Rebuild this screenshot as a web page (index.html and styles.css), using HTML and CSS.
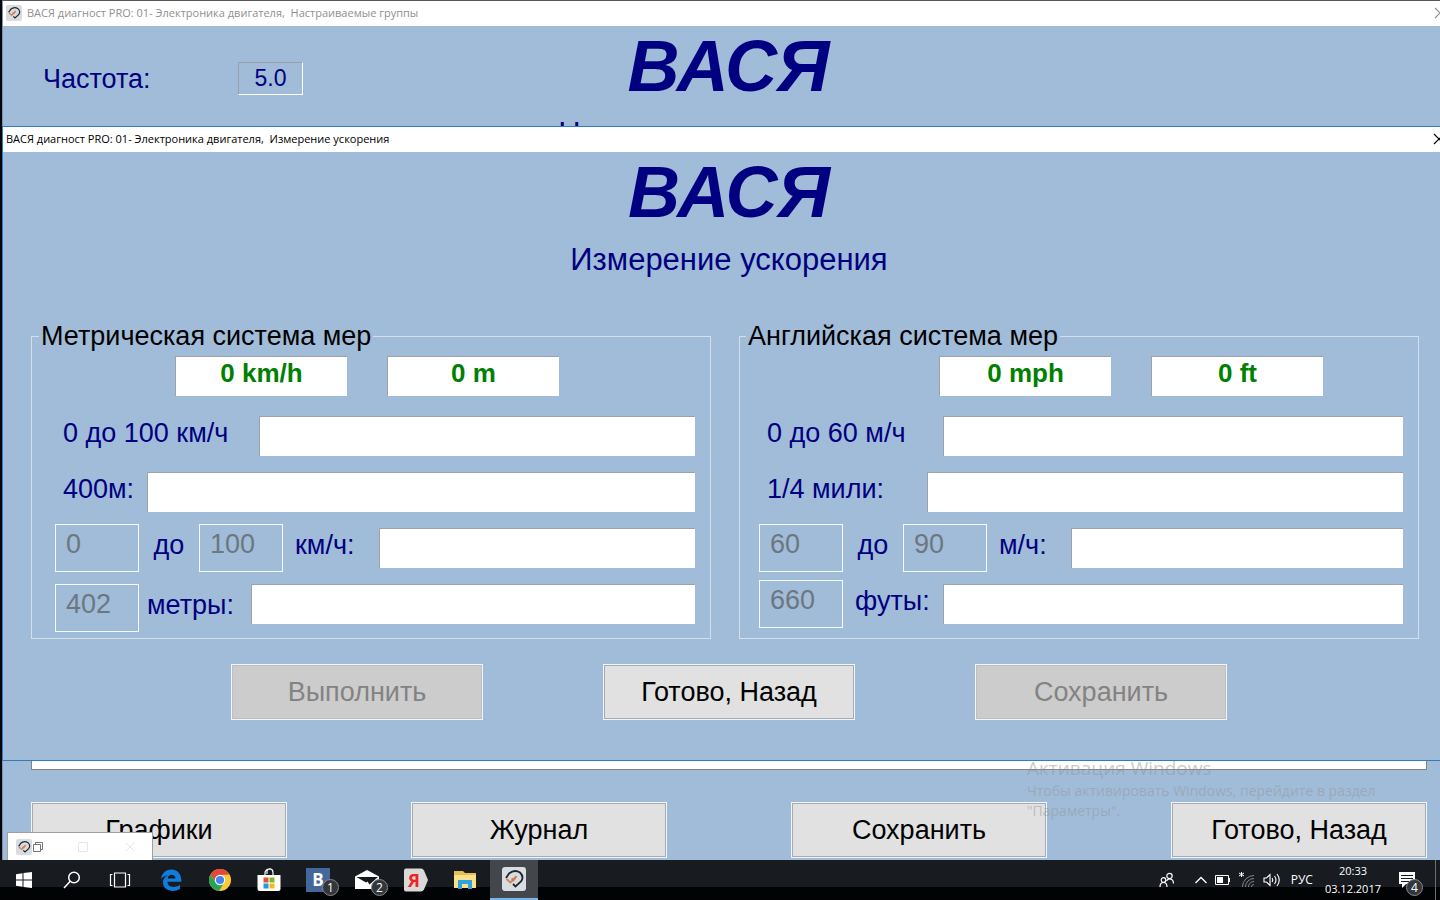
FILE: index.html
```html
<!DOCTYPE html>
<html lang="ru">
<head>
<meta charset="utf-8">
<title>ВАСЯ диагност PRO</title>
<link rel="stylesheet" href="styles.css">
</head>
<body>
<svg class="defs" width="0" height="0" aria-hidden="true">
  <symbol id="logo" viewBox="0 0 24 24">
    <rect width="24" height="24" rx="3" fill="#d9dde1"/>
    <path d="M4 11 L7 6.500 Q12.500 2 18 5.500 Q22.500 10 19 14.500 L13.500 19.500 L11 17" fill="none" stroke="#20242b" stroke-width="1.800"/>
    <path d="M4.500 12 L8.500 15.500 L13.500 10.500" fill="none" stroke="#c98764" stroke-width="2"/>
    <path d="M9.500 11.500 L11.500 13 L14.500 9" fill="none" stroke="#d67a4d" stroke-width="2"/>
  </symbol>
  <symbol id="close" viewBox="0 0 12 12"><path d="M1 1 L11 11 M11 1 L1 11" fill="none" stroke="currentColor" stroke-width="1.200"/></symbol>
</svg>

<div class="desktop">
  <section class="window window-main">
    <header class="titlebar titlebar-inactive">
      <svg class="title-icon"><use href="#logo"/></svg>
      <span class="title-text">ВАСЯ диагност PRO: 01- Электроника двигателя,&nbsp; Настраиваемые группы</span>
      <button class="close" aria-label="Закрыть"><svg width="12" height="12"><use href="#close"/></svg></button>
    </header>
    <div class="main-head">
      <div class="rate"><label for="rate">Частота:</label><input id="rate" class="rate-value" value="5.0" readonly></div>
      <h1 class="brand">ВАСЯ</h1>
      <h2 class="subtitle">Настраиваемые группы</h2>
    </div>
    <div class="main-list"></div>
    <div class="main-actions">
      <button class="btn">Графики</button>
      <button class="btn">Журнал</button>
      <button class="btn">Сохранить</button>
      <button class="btn">Готово, Назад</button>
    </div>
  </section>

  <div class="watermark">
    <p class="watermark-title">Активация Windows</p>
    <p class="watermark-text">Чтобы активировать Windows, перейдите в раздел "Параметры".</p>
  </div>

  <section class="window window-dialog">
    <header class="titlebar">
      <span class="title-text">ВАСЯ диагност PRO: 01- Электроника двигателя,&nbsp; Измерение ускорения</span>
      <button class="close" aria-label="Закрыть"><svg width="12" height="12"><use href="#close"/></svg></button>
    </header>
    <h1 class="brand">ВАСЯ</h1>
    <h2 class="subtitle">Измерение ускорения</h2>
    <div class="groups">
      <fieldset class="group group-metric">
        <legend>Метрическая система мер</legend>
        <div class="readouts"><output class="readout">0 km/h</output><output class="readout">0 m</output></div>
        <div class="row"><label class="lead lead-xl" for="m1">0 до 100 км/ч</label><input id="m1" class="field"></div>
        <div class="row"><label class="lead lead-s" for="m2">400м:</label><input id="m2" class="field"></div>
        <div class="row">
          <div class="range range-long"><input class="mini" value="0" aria-label="от" disabled><span class="between">до</span><input class="mini" value="100" aria-label="до" disabled><label class="unit" for="m3">км/ч:</label></div>
          <input id="m3" class="field">
        </div>
        <div class="row">
          <div class="range range-short range-low"><input class="mini" value="402" aria-label="расстояние" disabled><label class="unit unit-near" for="m4">метры:</label></div>
          <input id="m4" class="field">
        </div>
      </fieldset>
      <fieldset class="group group-english">
        <legend>Английская система мер</legend>
        <div class="readouts"><output class="readout">0 mph</output><output class="readout">0 ft</output></div>
        <div class="row"><label class="lead lead-l" for="e1">0 до 60 м/ч</label><input id="e1" class="field"></div>
        <div class="row"><label class="lead lead-m" for="e2">1/4 мили:</label><input id="e2" class="field"></div>
        <div class="row">
          <div class="range range-mid"><input class="mini" value="60" aria-label="от" disabled><span class="between">до</span><input class="mini" value="90" aria-label="до" disabled><label class="unit" for="e3">м/ч:</label></div>
          <input id="e3" class="field">
        </div>
        <div class="row">
          <div class="range range-feet"><input class="mini" value="660" aria-label="расстояние" disabled><label class="unit" for="e4">футы:</label></div>
          <input id="e4" class="field">
        </div>
      </fieldset>
    </div>
    <div class="dialog-actions">
      <button class="btn" disabled>Выполнить</button>
      <button class="btn">Готово, Назад</button>
      <button class="btn" disabled>Сохранить</button>
    </div>
  </section>

  <div class="mini-window">
    <svg width="16" height="16"><use href="#logo"/></svg>
    <svg width="10" height="10" viewBox="0 0 10 10" fill="none" stroke="#777"><path d="M0.500 2.500h7v7h-7z M2.500 2.500v-2h7v7h-2"/></svg>
    <svg class="mini-max" width="10" height="10" viewBox="0 0 10 10" fill="none" stroke="#e6e6e6"><path d="M0.500 0.500h9v9h-9z"/></svg>
    <svg class="mini-close" width="10" height="10"><use href="#close"/></svg>
  </div>
</div>

<footer class="taskbar">
  <div class="system">
    <button class="task" aria-label="Пуск"><svg width="16" height="16" viewBox="0 0 16 16" fill="#fff"><path d="M0 2.200 6.500 1.300V7.500H0z M7.500 1.100 16 0V7.500H7.500z M0 8.500H6.500V14.700L0 13.800z M7.500 8.500H16V16L7.500 14.900z"/></svg></button>
    <button class="task" aria-label="Поиск"><svg width="18" height="18" viewBox="0 0 18 18" fill="none" stroke="#fff" stroke-width="1.500"><circle cx="11" cy="6.500" r="5.300"/><path d="M7.200 10.300 1 17"/></svg></button>
    <button class="task" aria-label="Представление задач"><svg width="22" height="16" viewBox="0 0 22 16" fill="none" stroke="#fff" stroke-width="1.200"><path d="M5.500 1h11v14h-11z M3.500 2.500H1.500v11h2 M18.500 2.500h2v11h-2"/></svg></button>
  </div>
  <div class="apps">
    <button class="task" aria-label="Edge"><svg width="22" height="22" viewBox="0 0 22 22"><path d="M1 10 C2 3.500 6.500 0.500 11.500 0.500 C18 0.500 21.500 5.500 21.500 12.800 H7.500 C7.500 19 15.500 19 20 16 V20 C13 24 3 21.500 3 13.500 C3 9.500 5.500 7.500 8 6.300 C5 6.800 2.500 8 1 10 Z M7.700 9.500 H15.500 C15.500 4.500 8 4.500 7.700 9.500 Z" fill="#0f7ddb" fill-rule="evenodd"/></svg></button>
    <button class="task" aria-label="Chrome"><svg width="22" height="22" viewBox="0 0 22 22"><circle cx="11" cy="11" r="11" fill="#fbcb37"/><path d="M1.500 5.500 A11 11 0 0 1 20.500 5.500 L11 6 L6.700 13.500Z" fill="#df4a3c"/><path d="M1.500 5.500 A11 11 0 0 0 10 22 L15.300 13.500 L11 16 L6.700 13.500Z" fill="#2ba355"/><circle cx="11" cy="11" r="5.200" fill="#fff"/><circle cx="11" cy="11" r="4.100" fill="#4386f2"/></svg></button>
    <button class="task" aria-label="Магазин"><svg width="24" height="24" viewBox="0 0 24 24"><path d="M8 7V5a4 4 0 0 1 8 0v2 M10 6V4.500a3 3 0 0 1 6-1" fill="none" stroke="#fff" stroke-width="1.200"/><path d="M0.500 7h23v14q0 2-2 2h-19q-2 0-2-2z" fill="#fff"/><path d="M6.500 9.500h5v5h-5z" fill="#e8502f"/><path d="M12.500 9.500h5v5h-5z" fill="#7bb82c"/><path d="M6.500 15.500h5v5h-5z" fill="#1c9ce8"/><path d="M12.500 15.500h5v5h-5z" fill="#fbb81a"/></svg></button>
    <button class="task" aria-label="ВКонтакте"><span class="vk">B</span><span class="count">1</span></button>
    <button class="task" aria-label="Почта"><svg width="24" height="20" viewBox="0 0 24 20"><path d="M0 6.500 12 0 24 6.500V19H0z" fill="#fff"/><path d="M1.500 7H23L14.500 14.500 L12.500 11.500 L11 12.500Z" fill="#15181c"/></svg><span class="count">2</span></button>
    <button class="task" aria-label="Яндекс"><span class="ya"><svg class="ya-shape" width="24" height="24" viewBox="0 0 24 24"><path d="M2 0.500H17q2 0 3 2L24 12l-4 9.500q-1 2-3 2H2q-2 0-2-2v-19q0-2 2-2z" fill="#d9d9d9"/></svg><span class="ya-letter">Я</span></span></button>
    <button class="task" aria-label="Проводник"><svg width="22" height="20" viewBox="0 0 22 20"><path d="M0 1h9l2 2h11v15H0z" fill="#e9bd52"/><path d="M0 5h22v13H0z" fill="#fbe08a"/><path d="M4 10h14v9h-4v-5H8v5H4z" fill="#2da3e0"/></svg></button>
    <button class="task task-active" aria-label="ВАСЯ диагност"><svg width="24" height="24"><use href="#logo"/></svg></button>
  </div>
  <div class="tray">
    <svg class="people" width="16" height="16" viewBox="0 0 16 16" fill="none" stroke="#fff" stroke-width="1.200"><circle cx="10.500" cy="4" r="2.700"/><circle cx="4.500" cy="8" r="2.300"/><path d="M1 15q0-4.500 3.500-4.500T8 15 M7.500 9q1-2 3-2 4 0 4 4.500"/></svg>
    <svg width="12" height="8" viewBox="0 0 12 8" fill="none" stroke="#fff" stroke-width="1.300"><path d="M0.500 7 6 1.500 11.500 7"/></svg>
    <svg width="16" height="10" viewBox="0 0 16 10"><path d="M0.500 0.500h13v9H.5z M14.500 3v4" fill="none" stroke="#fff"/><path d="M2 2h6v6H2z" fill="#fff"/></svg>
    <svg width="16" height="16" viewBox="0 0 16 16" fill="none" stroke="#858789"><path d="M3.500 15A11.500 11.500 0 0 1 15 3.500 M6.500 15A8.500 8.500 0 0 1 15 6.500 M9.500 15A5.500 5.500 0 0 1 15 9.500 M12.500 15a2.500 2.500 0 0 1 2.500-2.500"/><path d="M2.500 0v5 M0 1l5 3 M5 1l-5 3" stroke="#fff"/></svg>
    <svg width="18" height="14" viewBox="0 0 18 14" fill="none" stroke="#fff" stroke-width="1.100"><path d="M1 5h2.500L7 1.500v11L3.500 9H1z M9 5q1.500 2 0 4 M11.500 3q3 4 0 8 M14 1q4.500 6 0 12"/></svg>
    <span class="lang">РУС</span>
    <time class="clock"><span>20:33</span><span>03.12.2017</span></time>
    <button class="notify" aria-label="Уведомления"><svg width="16" height="16" viewBox="0 0 16 16"><path d="M0 0h16v12H7l-4 4v-4H0z" fill="#fff"/><path d="M2 3.500h12 M2 6.500h12 M2 9.500h8" stroke="#15181c"/></svg><span class="count">4</span></button>
  </div>
</footer>
</body>
</html>
```
FILE: styles.css
```css
* { box-sizing: border-box; }

body {
  margin: 0;
  height: 100vh;
  display: flex;
  flex-direction: column;
  overflow: hidden;
  background: #02060e;
  font-family: "Liberation Sans", Arial, sans-serif;
  font-size: 27px;
  line-height: 32px;
  color: #000;
}

h1, h2, p { margin: 0; font-weight: normal; }
button, input { font: inherit; color: inherit; margin: 0; border-radius: 0; }
button { padding: 0; border: 0; background: none; }
svg { flex: none; display: block; }
.defs { position: absolute; }

.desktop { position: relative; flex: 1; min-height: 0; overflow: hidden; }

/* Windows */
.window { position: absolute; display: flex; flex-direction: column; background: #a0bcd9; }
.window-main { top: 0; bottom: 0; left: 2px; right: -14px; border-top: 1px solid #55555a; border-left: 1px solid #7d93ab; }
.window-dialog { top: 126px; left: 2px; right: -16px; border: 1px solid #2f7cc0; padding-bottom: 40px; }

.titlebar {
  display: flex;
  align-items: center;
  gap: 5px;
  height: 25px;
  padding: 0 8px 2px 3px;
  background: #fff;
  font-family: "Open Sans", "Noto Sans", sans-serif;
  font-size: 11px;
  line-height: 16px;
}
.window-dialog .titlebar { padding-right: 10px; }
.titlebar-inactive { color: #909090; }
.title-icon { width: 16px; height: 16px; }
.title-text { flex: 1; white-space: pre; }
.close { display: flex; }

.brand {
  text-align: center;
  font-size: 72px;
  line-height: 80px;
  font-weight: bold;
  font-style: italic;
  color: #000080;
}
.subtitle { margin-top: 10px; text-align: center; font-size: 31px; line-height: 36px; color: #000080; }

.main-head { position: relative; flex: 1; }
.rate {
  position: absolute;
  top: 36px;
  left: 40px;
  width: 260px;
  display: flex;
  justify-content: space-between;
  align-items: center;
  color: #000080;
}
.rate-value {
  width: 65px;
  height: 33px;
  padding: 0;
  border: 1px solid #fff;
  border-top-color: #9a9fa6;
  border-left-color: #9a9fa6;
  background: transparent;
  text-align: center;
  font-size: 23px;
}
.main-list { height: 400px; margin: 0 27px 0 28px; border: 1px solid #7e8488; background: #fff; }
.main-actions { display: flex; justify-content: space-between; padding: 32px 27px 2px 28px; }

.btn {
  width: 256px;
  height: 56px;
  border: 1px solid #f2f5f8;
  outline: 1px solid #a5acb3;
  outline-offset: -2px;
  background: #e1e1e1;
}
.btn:disabled { background: #ccc; color: #838383; outline-color: #bfbfbf; }

/* Measurement groups */
.groups { display: grid; grid-template-columns: 1fr 1fr; gap: 28px; margin-top: 42px; padding: 0 36px 0 28px; }
.group { min-width: 0; margin: 0; padding: 4px 15px 6px 23px; border: 1px solid #d3dfeb; }
.group legend { margin-left: -16px; padding: 0 2px; }
.group-english { padding-left: 19px; }
.group-english legend { margin-left: -13px; }

.readouts { display: flex; justify-content: center; gap: 40px; margin-bottom: 12px; }
.group-metric .readouts { padding-right: 16px; }
.group-english .readouts { padding-left: 100px; }
.readout {
  width: 172px;
  height: 40px;
  border-top: 1px solid #9aa2aa;
  border-left: 1px solid #9aa2aa;
  background: #fff;
  text-align: center;
  font-size: 26px;
  font-weight: bold;
  color: #008000;
}
.row { display: flex; align-items: center; height: 56px; color: #000080; }
.field {
  flex: 1;
  min-width: 0;
  height: 40px;
  padding: 0 8px;
  border: 0;
  border-top: 1px solid #9aa2aa;
  border-left: 1px solid #9aa2aa;
  background: #fff;
}
.lead { padding: 0 0 6px 8px; white-space: nowrap; }
.lead-s { width: 92px; }
.lead-m { width: 168px; }
.lead-l { width: 184px; }
.lead-xl { width: 204px; }
.range { display: flex; align-items: center; }
.range-long { width: 324px; }
.range-mid { width: 312px; }
.range-short { width: 196px; }
.range-feet { width: 184px; }
.range-low { padding-top: 8px; }
.mini {
  width: 84px;
  height: 48px;
  padding: 0 0 8px 10px;
  border: 1px solid #f6f8fa;
  background: transparent;
  color: #6d7780;
}
.between { width: 60px; padding-bottom: 6px; text-align: center; }
.unit { padding: 0 0 6px 12px; }
.unit-near { padding-left: 8px; }

.dialog-actions { display: flex; justify-content: center; gap: 120px; margin-top: 25px; }
.dialog-actions .btn { width: 252px; }

/* Activation notice */
.watermark {
  position: absolute;
  left: 1027px;
  bottom: 39px;
  width: 370px;
  font-family: "Open Sans", "Noto Sans", sans-serif;
  color: rgba(150, 150, 150, 0.5);
  pointer-events: none;
}
.watermark-title { font-size: 19px; line-height: 26px; }
.watermark-text { font-size: 14px; line-height: 20px; }

.mini-window {
  position: absolute;
  left: 7px;
  bottom: 0;
  width: 146px;
  height: 28px;
  display: flex;
  align-items: center;
  gap: 1px;
  padding-left: 8px;
  border: 1px solid #a0a0a0;
  border-bottom: 0;
  background: #fff;
  color: #e6e6e6;
}
.mini-max { margin-left: 34px; }
.mini-close { margin-left: 36px; }

/* Taskbar */
.taskbar {
  display: flex;
  height: 40px;
  background: linear-gradient(#181b20 0 27px, #020305 27px);
  color: #fff;
  font-family: "Open Sans", "Noto Sans", sans-serif;
  font-size: 11px;
  line-height: 18px;
}
.system { display: flex; }
.apps { display: flex; gap: 1px; margin-left: 3px; }
.task { position: relative; width: 48px; height: 40px; display: flex; align-items: center; justify-content: center; }
.task-active { background: #43474c; border-bottom: 2px solid #76b5ec; }
.vk { width: 24px; height: 24px; background: #45689a; font-size: 17px; line-height: 24px; font-weight: bold; }
.count {
  position: absolute;
  right: 3px;
  bottom: 4px;
  width: 17px;
  height: 17px;
  border: 1px solid #85888b;
  border-radius: 50%;
  background: #33363a;
  font-size: 12px;
  line-height: 15px;
  text-align: center;
}
.ya { display: grid; place-items: center start; }
.ya-shape, .ya-letter { grid-area: 1 / 1; }
.ya-letter { width: 20px; text-align: center; font-size: 18px; font-weight: bold; color: #ee2424; }

.tray { display: flex; align-items: center; gap: 8px; margin-left: auto; padding-right: 4px; }
.people { margin-right: 12px; }
.lang { margin-left: 2px; font-size: 12px; }
.clock { display: flex; flex-direction: column; margin-left: 4px; text-align: center; }
.notify { position: relative; width: 47px; height: 40px; display: flex; align-items: center; padding-left: 10px; border-right: 1px solid #6b6e72; }
.notify .count { right: 12px; }
```
